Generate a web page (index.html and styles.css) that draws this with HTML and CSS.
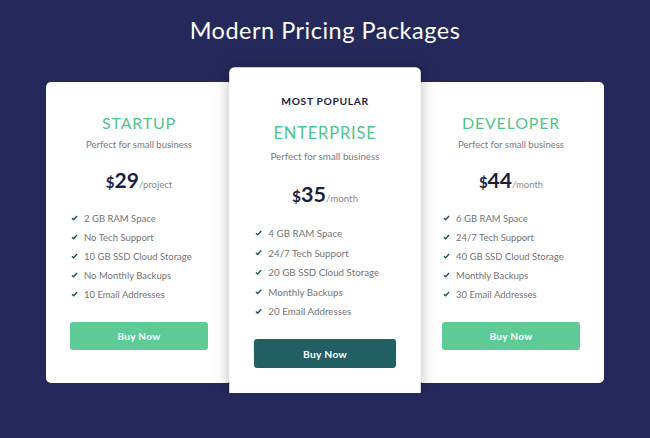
FILE: index.html
```html
<!DOCTYPE html>
<html>
<head>
<meta charset="utf-8">
<link rel="stylesheet" href="styles.css">
</head>
<body>
<header class="head">
  <h1 class="title">Modern Pricing Packages</h1>
</header>
<main class="plans">
  <section class="card">
    <h2 class="name">STARTUP</h2>
    <p class="desc">Perfect for small business</p>
    <div class="price"><span class="cur">$</span><span class="amt">29</span><span class="per">/project</span></div>
    <ul class="features">
      <li><svg class="chk" viewBox="0 0 8 7"><path d="M1 3.8 L3 5.6 L7 1.2" /></svg>2 GB RAM Space</li>
      <li><svg class="chk" viewBox="0 0 8 7"><path d="M1 3.8 L3 5.6 L7 1.2" /></svg>No Tech Support</li>
      <li><svg class="chk" viewBox="0 0 8 7"><path d="M1 3.8 L3 5.6 L7 1.2" /></svg>10 GB SSD Cloud Storage</li>
      <li><svg class="chk" viewBox="0 0 8 7"><path d="M1 3.8 L3 5.6 L7 1.2" /></svg>No Monthly Backups</li>
      <li><svg class="chk" viewBox="0 0 8 7"><path d="M1 3.8 L3 5.6 L7 1.2" /></svg>10 Email Addresses</li>
    </ul>
    <button class="btn">Buy Now</button>
  </section>
  <section class="card featured">
    <div class="popular">MOST POPULAR</div>
    <h2 class="name">ENTERPRISE</h2>
    <p class="desc">Perfect for small business</p>
    <div class="price"><span class="cur">$</span><span class="amt">35</span><span class="per">/month</span></div>
    <ul class="features">
      <li><svg class="chk" viewBox="0 0 8 7"><path d="M1 3.8 L3 5.6 L7 1.2" /></svg>4 GB RAM Space</li>
      <li><svg class="chk" viewBox="0 0 8 7"><path d="M1 3.8 L3 5.6 L7 1.2" /></svg>24/7 Tech Support</li>
      <li><svg class="chk" viewBox="0 0 8 7"><path d="M1 3.8 L3 5.6 L7 1.2" /></svg>20 GB SSD Cloud Storage</li>
      <li><svg class="chk" viewBox="0 0 8 7"><path d="M1 3.8 L3 5.6 L7 1.2" /></svg>Monthly Backups</li>
      <li><svg class="chk" viewBox="0 0 8 7"><path d="M1 3.8 L3 5.6 L7 1.2" /></svg>20 Email Addresses</li>
    </ul>
    <button class="btn dark">Buy Now</button>
  </section>
  <section class="card">
    <h2 class="name">DEVELOPER</h2>
    <p class="desc">Perfect for small business</p>
    <div class="price"><span class="cur">$</span><span class="amt">44</span><span class="per">/month</span></div>
    <ul class="features">
      <li><svg class="chk" viewBox="0 0 8 7"><path d="M1 3.8 L3 5.6 L7 1.2" /></svg>6 GB RAM Space</li>
      <li><svg class="chk" viewBox="0 0 8 7"><path d="M1 3.8 L3 5.6 L7 1.2" /></svg>24/7 Tech Support</li>
      <li><svg class="chk" viewBox="0 0 8 7"><path d="M1 3.8 L3 5.6 L7 1.2" /></svg>40 GB SSD Cloud Storage</li>
      <li><svg class="chk" viewBox="0 0 8 7"><path d="M1 3.8 L3 5.6 L7 1.2" /></svg>Monthly Backups</li>
      <li><svg class="chk" viewBox="0 0 8 7"><path d="M1 3.8 L3 5.6 L7 1.2" /></svg>30 Email Addresses</li>
    </ul>
    <button class="btn">Buy Now</button>
  </section>
</main>
</body>
</html>
```

FILE: styles.css
```css
html { background: #25285a; }
body {
  margin: 0;
  font-family: Lato, "Open Sans", sans-serif;
  color: #777;
}
.head { padding-top: 15px; }
.title {
  margin: 0 0 27px;
  text-align: center;
  color: #fff;
  font-size: 23.5px;
  line-height: 30px;
  font-weight: 400;
  letter-spacing: 0.5px;
}
.plans {
  display: flex;
  justify-content: center;
  align-items: center;
}
.card {
  width: 186px;
  box-sizing: border-box;
  background: #fff;
  border-radius: 5px;
  padding: 31px 24px 33px;
  text-align: center;
}
.featured {
  position: relative;
  z-index: 1;
  transform: scale(1.03);
  padding-top: 26px;
  padding-bottom: 29px;
  box-shadow: 0 0 14px rgba(0, 0, 0, 0.25);
}
.popular {
  font-size: 10px;
  line-height: 14px;
  font-weight: 700;
  color: #1b1e3f;
  letter-spacing: 0.6px;
  margin-bottom: 14px;
}
.name {
  margin: 0;
  font-size: 16px;
  line-height: 20px;
  font-weight: 400;
  color: #4fc48d;
  letter-spacing: 0.8px;
}
.desc {
  margin: 5px 0 0;
  font-size: 9.5px;
  line-height: 14px;
  color: #7a7a7a;
}
.featured .desc { margin-top: 6px; }
.price {
  display: flex;
  justify-content: center;
  align-items: baseline;
  box-sizing: border-box;
  height: 28px;
  padding-top: 3px;
  margin-top: 14px;
  color: #1b1e3f;
  font-weight: 700;
}
.price span { line-height: 1; }
.featured .price { margin-top: 15px; }
.cur { font-size: 15px; }
.amt { font-size: 21px; }
.per {
  font-size: 9.5px;
  font-weight: 400;
  color: #8a8a8a;
}
.features {
  list-style: none;
  margin: 15px 0 0;
  padding: 0;
  text-align: left;
}
.featured .features { margin-top: 15px; }
.features li {
  display: flex;
  align-items: center;
  height: 19px;
  font-size: 9.5px;
  color: #747474;
}
.chk {
  width: 7px;
  height: 6px;
  margin: 0 6px 2px 1px;
  fill: none;
  stroke: #1e5257;
  stroke-width: 1.6;
}
.btn {
  display: block;
  width: 100%;
  height: 28px;
  margin-top: 18px;
  border: 0;
  border-radius: 3px;
  background: #5ecb97;
  color: #fff;
  font-family: inherit;
  font-size: 10px;
  font-weight: 700;
  letter-spacing: 0.3px;
}
.featured .btn { margin-top: 17px; }
.btn.dark { background: #215f63; }
```
